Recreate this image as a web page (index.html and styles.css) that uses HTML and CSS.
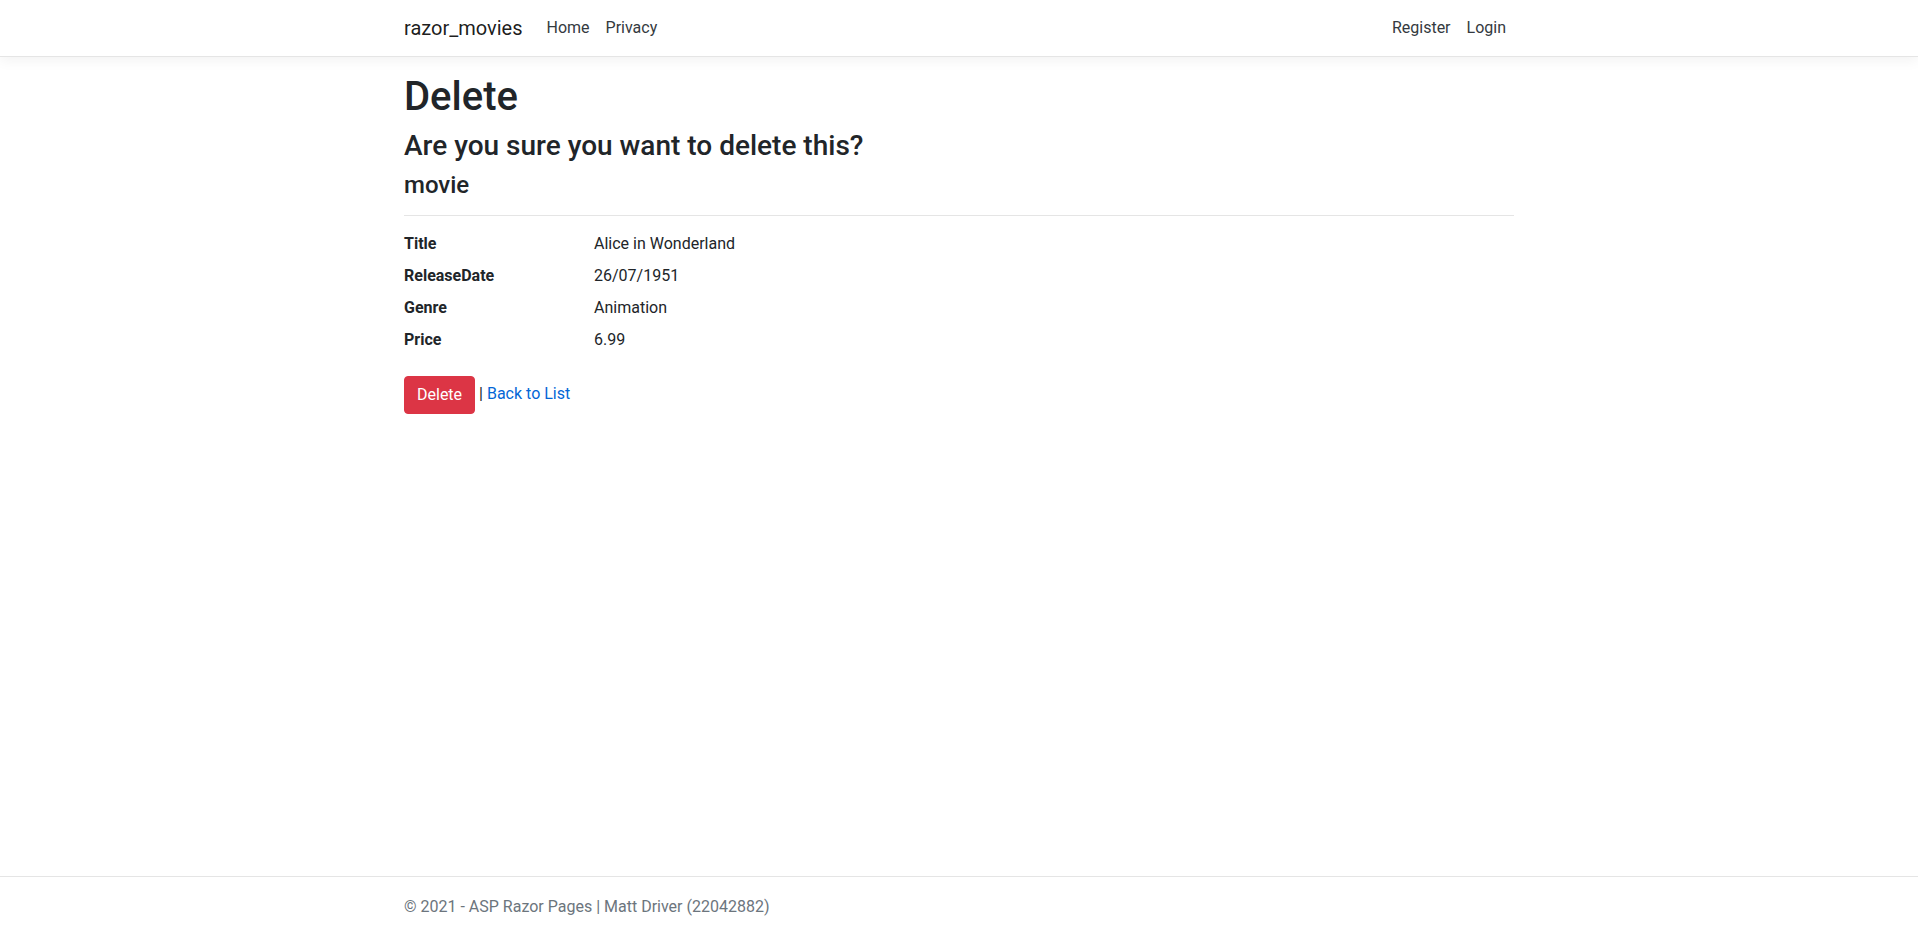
FILE: index.html
```html
<!DOCTYPE html>
<html lang="en">
<head>
<meta charset="utf-8">
<title>Delete - razor_movies</title>
<link rel="stylesheet" href="styles.css">
</head>
<body>
<header class="site-header">
  <nav class="navbar">
    <div class="container nav-inner">
      <a class="brand" href="#">razor_movies</a>
      <ul class="nav-list grow">
        <li><a class="nav-link" href="#">Home</a></li>
        <li><a class="nav-link" href="#">Privacy</a></li>
      </ul>
      <ul class="nav-list">
        <li><a class="nav-link" href="#">Register</a></li>
        <li><a class="nav-link" href="#">Login</a></li>
      </ul>
    </div>
  </nav>
</header>
<div class="container main">
  <h1>Delete</h1>
  <h3>Are you sure you want to delete this?</h3>
  <div>
    <h4>movie</h4>
    <hr>
    <dl class="details">
      <dt>Title</dt><dd>Alice in Wonderland</dd>
      <dt>ReleaseDate</dt><dd>26/07/1951</dd>
      <dt>Genre</dt><dd>Animation</dd>
      <dt>Price</dt><dd>6.99</dd>
    </dl>
    <form class="actions">
      <button type="button" class="btn btn-danger">Delete</button> | <a class="link" href="#">Back to List</a>
    </form>
  </div>
</div>
<footer class="footer">
  <div class="container">&copy; 2021 - ASP Razor Pages | Matt Driver (22042882)</div>
</footer>
</body>
</html>
```

FILE: styles.css
```css
* { box-sizing: border-box; }
html { font-size: 16px; }
body {
  margin: 0;
  min-height: 100vh;
  display: flex;
  flex-direction: column;
  font-family: "Segoe UI", Roboto, "Liberation Sans", Arial, sans-serif;
  font-size: 1rem;
  line-height: 1.5;
  color: #212529;
  background: #fff;
}
a { text-decoration: none; }
.container {
  width: 100%;
  max-width: 1140px;
  margin: 0 auto;
  padding: 0 15px;
}
.navbar {
  background: #fff;
  border-bottom: 1px solid #e5e5e5;
  box-shadow: 0 .25rem .75rem rgba(0,0,0,.05);
  padding: .5rem 1rem;
  margin-bottom: 1rem;
}
.nav-inner {
  display: flex;
  align-items: center;
}
.brand {
  display: inline-block;
  padding: .3125rem 0;
  margin-right: 1rem;
  font-size: 1.25rem;
  line-height: 1.5;
  color: rgba(0,0,0,.9);
  white-space: nowrap;
}
.nav-list {
  display: flex;
  list-style: none;
  margin: 0;
  padding: 0;
}
.grow { flex-grow: 1; }
.nav-link {
  display: block;
  padding: .5rem .5rem;
  color: #343a40;
}
.main {
  padding-bottom: 1rem;
}
h1, h3, h4 {
  margin: 0 0 .5rem;
  font-weight: 500;
  line-height: 1.2;
}
h1 { font-size: 2.5rem; }
h3 { font-size: 1.75rem; }
h4 { font-size: 1.5rem; }
hr {
  margin: 1rem 0;
  border: 0;
  border-top: 1px solid rgba(0,0,0,.1);
  height: 0;
}
.details {
  display: grid;
  grid-template-columns: 190px 1fr;
  margin: 0 -15px 1rem;
}
.details dt, .details dd {
  padding: 0 15px;
  margin: 0 0 .5rem;
}
.details dt { font-weight: 700; }
.actions { margin: 0; }
.btn {
  display: inline-block;
  font-family: inherit;
  font-size: 1rem;
  line-height: 1.5;
  padding: .375rem .75rem;
  border: 1px solid transparent;
  border-radius: .25rem;
  vertical-align: middle;
  cursor: pointer;
}
.btn-danger {
  color: #fff;
  background: #dc3545;
  border-color: #dc3545;
}
.link { color: #0366d6; }
.footer {
  margin-top: auto;
  border-top: 1px solid #e5e5e5;
  color: #6c757d;
  line-height: 60px;
  white-space: nowrap;
}
```
